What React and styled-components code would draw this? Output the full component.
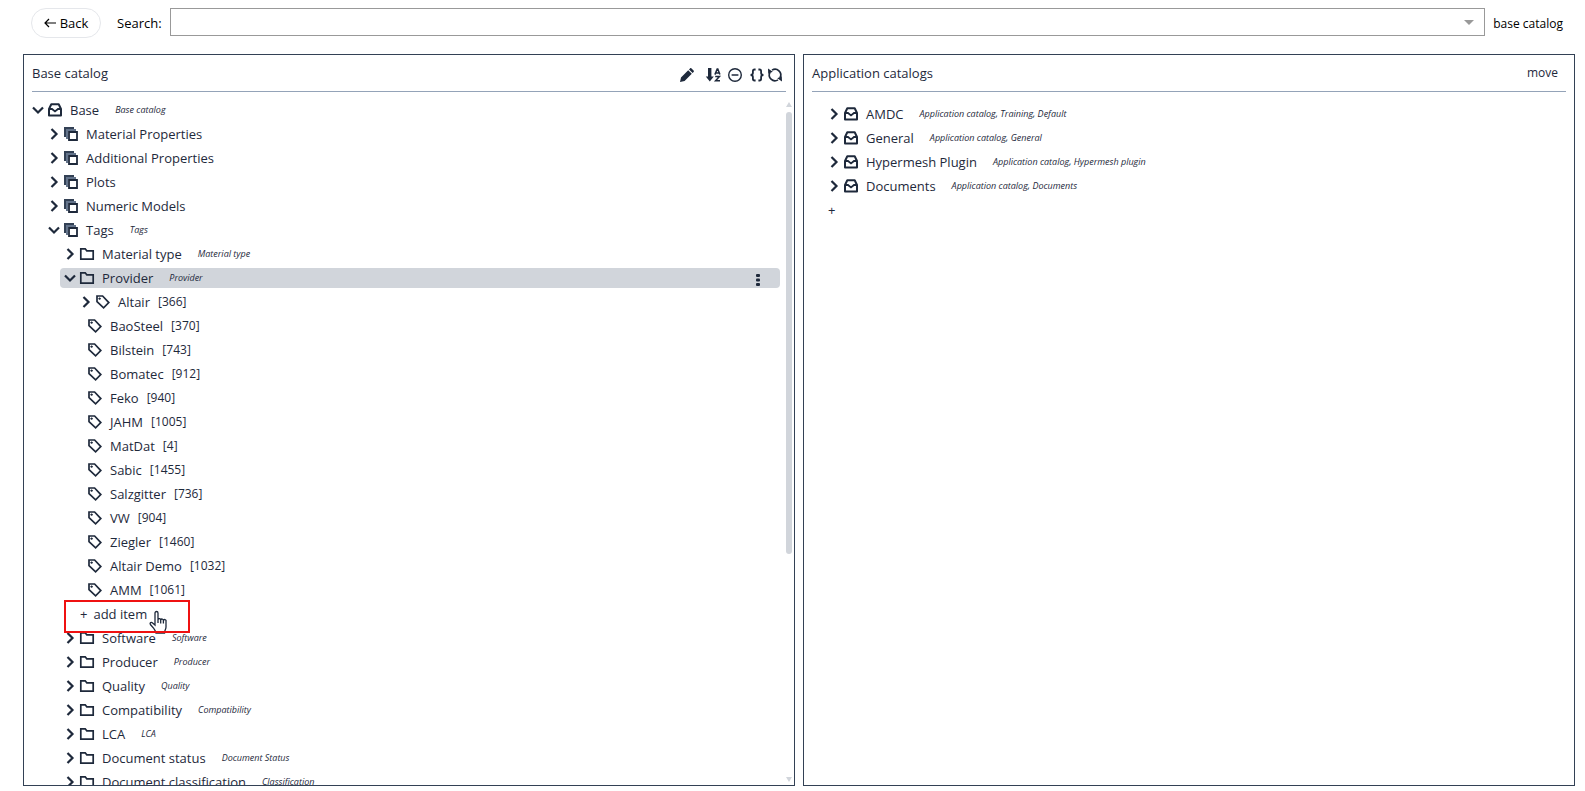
import React from "react";
import styled, { createGlobalStyle } from "styled-components";

const base = [
  { level: 0, icon: "inbox", open: true, label: "Base", note: "Base catalog" },
  { level: 1, icon: "stack", label: "Material Properties" },
  { level: 1, icon: "stack", label: "Additional Properties" },
  { level: 1, icon: "stack", label: "Plots" },
  { level: 1, icon: "stack", label: "Numeric Models" },
  { level: 1, icon: "stack", open: true, label: "Tags", note: "Tags" },
  { level: 2, icon: "folder", label: "Material type", note: "Material type" },
  { level: 2, icon: "folder", open: true, selected: true, label: "Provider", note: "Provider" },
  { level: 3, icon: "tag", label: "Altair", count: 366 },
  { level: 3, icon: "tag", leaf: true, label: "BaoSteel", count: 370 },
  { level: 3, icon: "tag", leaf: true, label: "Bilstein", count: 743 },
  { level: 3, icon: "tag", leaf: true, label: "Bomatec", count: 912 },
  { level: 3, icon: "tag", leaf: true, label: "Feko", count: 940 },
  { level: 3, icon: "tag", leaf: true, label: "JAHM", count: 1005 },
  { level: 3, icon: "tag", leaf: true, label: "MatDat", count: 4 },
  { level: 3, icon: "tag", leaf: true, label: "Sabic", count: 1455 },
  { level: 3, icon: "tag", leaf: true, label: "Salzgitter", count: 736 },
  { level: 3, icon: "tag", leaf: true, label: "VW", count: 904 },
  { level: 3, icon: "tag", leaf: true, label: "Ziegler", count: 1460 },
  { level: 3, icon: "tag", leaf: true, label: "Altair Demo", count: 1032 },
  { level: 3, icon: "tag", leaf: true, label: "AMM", count: 1061 },
  { level: 3, add: true, label: "add item" },
  { level: 2, icon: "folder", label: "Software", note: "Software" },
  { level: 2, icon: "folder", label: "Producer", note: "Producer" },
  { level: 2, icon: "folder", label: "Quality", note: "Quality" },
  { level: 2, icon: "folder", label: "Compatibility", note: "Compatibility" },
  { level: 2, icon: "folder", label: "LCA", note: "LCA" },
  { level: 2, icon: "folder", label: "Document status", note: "Document Status" },
  { level: 2, icon: "folder", label: "Document classification", note: "Classification" },
];

const applications = [
  { level: 0, icon: "inbox", label: "AMDC", note: "Application catalog, Training, Default" },
  { level: 0, icon: "inbox", label: "General", note: "Application catalog, General" },
  { level: 0, icon: "inbox", label: "Hypermesh Plugin", note: "Application catalog, Hypermesh plugin" },
  { level: 0, icon: "inbox", label: "Documents", note: "Application catalog, Documents" },
];

const icons = {
  inbox: (
    <>
      <path d="M3.300 1.300h7.400L13 6v6.600H1V6z" strokeLinejoin="round" />
      <path d="M1 6h3l3 2.400L10 6h3" strokeWidth="1.800" />
    </>
  ),
  stack: (
    <>
      <path d="M0 0h10v2H2v8H0z" fill="#334155" stroke="none" />
      <path d="M2 2h10v2H4v8H2z" fill="#64748b" stroke="none" />
      <path d="M5 5h8v8H5z" strokeWidth="1.800" />
    </>
  ),
  folder: <path d="M.8 12.2V1.8h4.4l1.600 2h6.400v8.400z" strokeWidth="1.700" />,
  tag: (
    <>
      <path d="M1 1h5.600l6.200 6.600-5.200 5.200L1 6.600z" strokeWidth="1.700" />
      <path d="M3.600 2.400v2.400M2.400 3.600h2.400" strokeWidth="1.100" />
    </>
  ),
  pencil: (
    <path
      d="M0 14l1-4.600L8.200 2.200l3.600 3.600L4.600 13zM9 1.400l1-1c.5-.5 1-.5 1.500 0l2.100 2.100c.5.500.5 1 0 1.500l-1 1z"
      fill="currentColor"
      stroke="none"
    />
  ),
  sort: (
    <>
      <path d="M2 0h3.400v8.400h2.400L3.800 13.500-.2 8.400H2z" fill="currentColor" stroke="none" />
      <path d="M8.900 6.600L11.200.9h.6l2.100 5.700M9.800 4.900h3.600M9.200 8.600h4.200L9.600 12.700h4.400" strokeWidth="1.500" />
    </>
  ),
  minus: (
    <>
      <circle cx="7" cy="7" r="6.300" strokeWidth="1.400" />
      <path d="M3.600 7h6.800" strokeWidth="1.500" />
    </>
  ),
  braces: (
    <path
      d="M5.600 1.500H4.500C3.200 1.500 2.900 2.200 2.900 3.200v1.900C2.900 6.200 2.200 6.900.6 7c1.600.1 2.300.8 2.300 1.900v1.900c0 1 .3 1.700 1.600 1.700h1.100M8.400 1.500h1.100c1.300 0 1.600.7 1.600 1.700v1.900c0 1.100.7 1.800 2.300 1.900-1.600.1-2.300.8-2.300 1.900v1.900c0 1-.3 1.700-1.600 1.700H8.400"
      strokeWidth="1.800"
    />
  ),
  sync: (
    <>
      <path d="M4 2.100A5.700 5.700 0 0 1 12 9.700M10 11.900A5.700 5.700 0 0 1 2 4.300" strokeWidth="1.700" />
      <path d="M14 13.400l-.2-5.200-4.600 2zM0 .6l.2 5.200 4.600-2z" fill="currentColor" stroke="none" />
    </>
  ),
};

function Icon({ name }) {
  return (
    <Glyph viewBox="0 0 14 14" aria-hidden="true">
      {icons[name]}
    </Glyph>
  );
}

function Chevron({ open }) {
  return (
    <Toggle aria-label={open ? "Collapse" : "Expand"}>
      <Arrow viewBox="0 0 12 12" aria-hidden="true">
        <path d={open ? "M1 3.500l5 5 5-5" : "M3.500 1l5 5-5 5"} />
      </Arrow>
    </Toggle>
  );
}

function TreeRow({ item }) {
  if (item.add) {
    return (
      <Row $level={item.level}>
        <AddItem>
          <span>+</span>
          {item.label}
        </AddItem>
        <Marker />
        <Hand viewBox="0 0 18 24" aria-hidden="true">
          <path d="M6 15V3a1.500 1.500 0 0 1 3 0v6.500a1.400 1.400 0 0 1 2.700.4 1.400 1.400 0 0 1 2.700.6 1.300 1.300 0 0 1 2.600.7V17c0 2.500-1.500 3-1.500 6H7c0-2-1.500-3-2.500-5L1.400 14.500c-.9-1.600.8-2.900 2.200-1.600zM9 9.500V13M11.700 10v3.400M14.400 10.600v3" />
        </Hand>
      </Row>
    );
  }
  return (
    <Row $level={item.level} $leaf={item.leaf} $selected={item.selected}>
      {!item.leaf && <Chevron open={item.open} />}
      <Icon name={item.icon} />
      <Label>{item.label}</Label>
      {item.note && <Note>{item.note}</Note>}
      {item.count && <Count>[{item.count}]</Count>}
      {item.selected && (
        <More aria-label="More">
          <svg width="4" height="12" viewBox="0 0 4 12" fill="currentColor">
            <rect width="4" height="3" rx="1" />
            <rect y="4.500" width="4" height="3" rx="1" />
            <rect y="9" width="4" height="3" rx="1" />
          </svg>
        </More>
      )}
    </Row>
  );
}

function App() {
  return (
    <Page>
      <GlobalStyle />
      <Toolbar>
        <BackButton>
          <svg width="12" height="10" viewBox="0 0 12 10" fill="none" stroke="currentColor" strokeWidth="1.200">
            <path d="M12 5H1M5 1L1 5l4 4" />
          </svg>
          Back
        </BackButton>
        <SearchLabel htmlFor="search">Search:</SearchLabel>
        <SearchBox>
          <SearchInput id="search" type="text" />
          <Caret />
        </SearchBox>
        <Scope>base catalog</Scope>
      </Toolbar>
      <Panels>
        <Panel>
          <Header>
            <Title>Base catalog</Title>
            <Actions>
              <Action aria-label="Edit"><Icon name="pencil" /></Action>
              <Action aria-label="Sort" $space={12}><Icon name="sort" /></Action>
              <Action aria-label="Collapse all" $space={8}><Icon name="minus" /></Action>
              <Action aria-label="Source" $space={8}><Icon name="braces" /></Action>
              <Action aria-label="Refresh" $space={4}><Icon name="sync" /></Action>
            </Actions>
          </Header>
          <Body>
            <Tree>
              {base.map((item) => <TreeRow key={item.label} item={item} />)}
            </Tree>
            <ScrollBar>
              <ScrollArrow />
              <Track><Thumb /></Track>
              <ScrollArrow $down />
            </ScrollBar>
          </Body>
        </Panel>
        <Panel>
          <Header>
            <Title>Application catalogs</Title>
            <Move>move</Move>
          </Header>
          <Applications>
            {applications.map((item) => <TreeRow key={item.label} item={item} />)}
            <AddCatalog aria-label="Add catalog">+</AddCatalog>
          </Applications>
        </Panel>
      </Panels>
    </Page>
  );
}

export default App;

const GlobalStyle = createGlobalStyle`
  * {
    box-sizing: border-box;
  }

  body {
    margin: 0;
    background: #fff;
    color: #1e293b;
    font-family: "Open Sans", "Noto Sans", sans-serif;
    font-size: 13px;
    line-height: 20px;
  }

  button, input {
    font: inherit;
    color: inherit;
    background: none;
    border: 0;
    padding: 0;
  }
`;

const Page = styled.div`
  display: flex;
  flex-direction: column;
  height: 100vh;
  padding: 8px 10px 5px 23px;
  overflow: hidden;
`;

const Toolbar = styled.div`
  display: flex;
  align-items: flex-start;
  margin-bottom: 16px;
  padding: 0 12px 0 8px;
  color: #000;
`;

const BackButton = styled.button`
  display: flex;
  align-items: center;
  justify-content: center;
  gap: 4px;
  width: 70px;
  height: 30px;
  border: 1px solid #e5e7eb;
  border-radius: 15px;
`;

const SearchLabel = styled.label`
  margin: 5px 8px 0 16px;
`;

const SearchBox = styled.div`
  display: flex;
  align-items: center;
  flex: 1;
  height: 28px;
  padding-right: 10px;
  border: 1px solid #999;
`;

const SearchInput = styled.input`
  flex: 1;
  height: 26px;
  padding: 0 8px;
  outline: none;
`;

const Caret = styled.span`
  border: 5px solid transparent;
  border-top-color: #999;
  border-bottom: 0;
`;

const Scope = styled.span`
  margin: 6px 0 0 8px;
  font-size: 12px;
`;

const Panels = styled.div`
  display: flex;
  flex: 1;
  gap: 8px;
  min-height: 0;
`;

const Panel = styled.section`
  display: flex;
  flex: 1;
  flex-direction: column;
  min-width: 0;
  border: 1px solid #334155;
`;

const Header = styled.header`
  display: flex;
  align-items: center;
  justify-content: space-between;
  height: 37px;
  margin: 0 8px;
  border-bottom: 1px solid #94a3b8;
`;

const Title = styled.h2`
  margin: 0;
  font-size: 13px;
  font-weight: 400;
`;

const Actions = styled.div`
  display: flex;
  padding: 4px 4px 0 0;
`;

const Action = styled.button`
  display: flex;
  margin-left: ${(props) => props.$space || 0}px;
`;

const Move = styled.button`
  padding-right: 8px;
  font-size: 12px;
`;

const Body = styled.div`
  display: flex;
  flex: 1;
  min-height: 0;
  padding: 8px 2px 0 4px;
`;

const Tree = styled.div`
  flex: 1;
  min-width: 0;
  overflow: hidden;
`;

const Applications = styled.div`
  padding: 12px 8px 0 20px;
`;

const Row = styled.div`
  position: relative;
  display: flex;
  align-items: center;
  height: 20px;
  margin: 0 0 4px ${(props) => props.$level * 16}px;
  padding-left: ${(props) => (props.$leaf ? 12 : 4)}px;
  border-radius: 4px;
  background: ${(props) => (props.$selected ? "#d1d5db" : "none")};
  white-space: nowrap;
`;

const Toggle = styled.button`
  display: flex;
  margin-right: 4px;
`;

const Arrow = styled.svg`
  width: 12px;
  height: 12px;
  fill: none;
  stroke: currentColor;
  stroke-width: 2.2;
`;

const Glyph = styled.svg`
  flex: none;
  width: 14px;
  height: 14px;
  overflow: visible;
  fill: none;
  stroke: currentColor;
  stroke-width: 2;
`;

const Label = styled.span`
  margin-left: 8px;
`;

const Note = styled.span`
  margin-left: 16px;
  font-size: 9px;
  font-style: italic;
`;

const Count = styled.span`
  margin-left: 8px;
  font-size: 12px;
`;

const More = styled.button`
  display: flex;
  margin: 4px 20px 0 auto;
`;

const AddItem = styled.button`
  display: flex;
  gap: 6px;
`;

const Marker = styled.span`
  position: absolute;
  z-index: 2;
  top: -4px;
  left: -12px;
  width: 126px;
  height: 33px;
  border: 2px solid #ef1111;
`;

const Hand = styled.svg`
  position: absolute;
  z-index: 1;
  top: 6px;
  left: 73px;
  width: 18px;
  height: 24px;
  fill: #fff;
  stroke: #1e293b;
  stroke-width: 1.3;
`;

const ScrollBar = styled.div`
  display: flex;
  flex-direction: column;
  width: 6px;
  margin-left: 6px;
  padding: 2px 0 3px;
`;

const ScrollArrow = styled.span`
  border: 3px solid transparent;
  border-${(props) => (props.$down ? "top" : "bottom")}: 5px solid #d1d5db;
  border-${(props) => (props.$down ? "bottom" : "top")}: 0;
`;

const Track = styled.div`
  flex: 1;
  padding: 5px 0;
`;

const Thumb = styled.div`
  height: 67%;
  border-radius: 3px;
  background: #d1d5db;
`;

const AddCatalog = styled.button`
  margin-left: 4px;
`;
